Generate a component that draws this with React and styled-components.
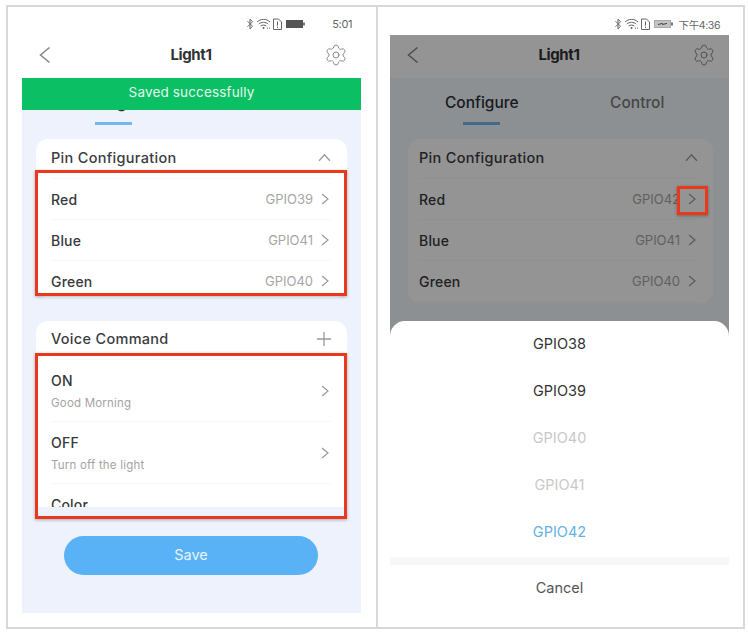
import React from 'react';
import styled, { createGlobalStyle } from 'styled-components';
import { Settings } from 'lucide-react';

const GlobalStyle = createGlobalStyle`
  body {
    margin: 0;
    background: #fff;
    font-family: Inter, "Noto Sans CJK SC", sans-serif;
  }
`;

const Frame = styled.div`
  box-sizing: border-box;
  width: 739px;
  height: 624px;
  margin: 5px 0 0 6px;
  border: 2px solid #d6d8d9;
  display: flex;
`;

const Panel = styled.div`
  box-sizing: border-box;
  width: ${p => p.$width}px;
  padding-left: ${p => p.$pad}px;
  border-left: ${p => (p.$divider ? '2px solid #d6d8d9' : 'none')};
  background: #fff;
`;

const StatusBar = styled.div`
  box-sizing: border-box;
  width: 339px;
  height: 28px;
  padding: 6px 9px 0 0;
  display: flex;
  align-items: center;
  justify-content: flex-end;
`;

const StatusTime = styled.span`
  margin-left: ${p => p.$gap}px;
  font-size: ${p => p.$size}px;
  letter-spacing: -0.4px;
  color: #666;
`;

const Screen = styled.div`
  position: relative;
  width: 339px;
  height: ${p => p.$height}px;
  background: ${p => p.$bg};
  overflow: hidden;
`;

const Header = styled.div`
  box-sizing: border-box;
  height: 43px;
  padding: 0 13px 4px 14px;
  background: #fff;
  display: flex;
  align-items: center;
  justify-content: space-between;
  color: #8a8a8a;
`;

const Title = styled.div`
  margin-left: 4px;
  font-size: 15px;
  font-weight: 700;
  letter-spacing: -0.4px;
  color: #2f3033;
`;

const Toast = styled.div`
  position: absolute;
  top: 43px;
  left: 0;
  right: 0;
  box-sizing: border-box;
  height: 32px;
  padding-bottom: 5px;
  background: #0bbf64;
  color: #e4f8ec;
  font-size: 13.5px;
  letter-spacing: 0.15px;
  display: flex;
  align-items: center;
  justify-content: center;
`;

const Tabs = styled.div`
  height: 47px;
  padding: 0 14px;
  display: flex;
`;

const Tab = styled.div`
  flex: 1;
  position: relative;
  display: flex;
  justify-content: center;
  padding-top: 15px;
  font-size: 15.5px;
  font-weight: 500;
  color: ${p => (p.$active ? '#2c3036' : '#7a7a7a')};
  &::after {
    content: '';
    display: ${p => (p.$active ? 'block' : 'none')};
    position: absolute;
    bottom: 0;
    left: 59px;
    width: 37px;
    height: 3px;
    background: #6fb8f0;
  }
`;

const Card = styled.div`
  box-sizing: border-box;
  width: ${p => p.$width || 311}px;
  height: ${p => p.$height}px;
  margin: ${p => p.$top}px 0 0 ${p => p.$left || 14}px;
  padding: 0 ${p => p.$padRight || 16}px 0 ${p => p.$padLeft || 15}px;
  background: #fff;
  border-radius: ${p => (p.$clip ? '12px 12px 0 0' : '12px')};
  overflow: hidden;
`;

const CardHead = styled.div`
  box-sizing: border-box;
  height: ${p => p.$height}px;
  padding-bottom: 3px;
  display: flex;
  align-items: center;
  justify-content: space-between;
  font-size: 14.5px;
  font-weight: 500;
  letter-spacing: 0.3px;
  color: #3a3c3f;
  border-bottom: 1px solid #f8f8fa;
`;

const Row = styled.div`
  box-sizing: border-box;
  height: ${p => p.$height}px;
  display: flex;
  align-items: center;
  justify-content: space-between;
  border-bottom: 1px solid #f8f8fa;
`;

const RowLabel = styled.div`
  font-size: 14px;
  font-weight: 500;
  letter-spacing: 0.2px;
  color: #37393c;
`;

const RowSub = styled.div`
  margin-top: 7px;
  font-size: 11.5px;
  letter-spacing: 0.2px;
  color: #a3a3a3;
`;

const RowRight = styled.div`
  display: flex;
  align-items: center;
  gap: 6px;
  font-size: 13px;
  color: #a6a6a6;
`;

const SaveButton = styled.div`
  box-sizing: border-box;
  width: 254px;
  height: 39px;
  margin: 29px 0 0 42px;
  padding-bottom: 2px;
  border-radius: 20px;
  background: #5ab2f6;
  color: #e6f4ff;
  font-size: 14.5px;
  display: flex;
  align-items: center;
  justify-content: center;
`;

const Highlight = styled.div`
  position: absolute;
  box-sizing: border-box;
  left: ${p => p.$x}px;
  top: ${p => p.$y}px;
  width: ${p => p.$w}px;
  height: ${p => p.$h}px;
  border: 3px solid #e8391d;
  box-shadow: 0 1px 3px rgba(0, 0, 0, 0.3);
  z-index: 3;
`;

const Dim = styled.div`
  position: absolute;
  inset: 0;
  background: rgba(0, 0, 0, 0.42);
`;

const Sheet = styled.div`
  position: absolute;
  left: 0;
  right: 0;
  top: 286px;
  bottom: 0;
  background: #fff;
  border-radius: 15px 15px 0 0;
  text-align: center;
`;

const SheetItem = styled.div`
  box-sizing: border-box;
  height: 47px;
  padding-bottom: 3px;
  display: flex;
  align-items: center;
  justify-content: center;
  font-size: 14.5px;
  color: ${p => p.$color};
`;

const SheetGap = styled.div`
  height: 8px;
  margin-top: 1px;
  background: #f7f7f7;
`;

const Chevron = ({ dir = 'right', size = 12, color = '#9a9a9a', width = 1.2 }) => {
  const points = {
    right: '3,1 9,6 3,11',
    left: '9,1 3,6 9,11',
    up: '1,9 6,3.5 11,9',
  };
  return (
    <svg width={size} height={size} viewBox="0 0 12 12" fill="none" stroke={color} strokeWidth={width}>
      <polyline points={points[dir]} />
    </svg>
  );
};

const Plus = () => (
  <svg width="14" height="14" viewBox="0 0 14 14" stroke="#9a9a9a" strokeWidth="1.3">
    <path d="M7 0V14M0 7H14" />
  </svg>
);

const StatusIcons = ({ charging }) => (
  <svg width="58" height="14" viewBox="0 0 58 14" fill="none" stroke="#666" strokeWidth="1">
    {/* bluetooth */}
    <path d="M0.5 4.2L5.5 9.2L3 12V2L5.5 4.8L0.5 9.8" />
    {/* wifi */}
    <path d="M10 5C13.5 1.5 19.5 1.5 23 5M11.8 7C14.2 4.8 18.8 4.8 21.2 7M13.6 9C15.2 7.8 17.8 7.8 19.4 9" />
    <circle cx="16.5" cy="11" r="1" fill="#666" stroke="none" />
    <path d="M20 11.2H23" strokeDasharray="1 1" />
    {/* sim */}
    <path d="M26.5 2H31.5L34.5 5V12.5H26.5Z" />
    <path d="M30.5 4.5V8.6M30.5 9.6V11" />
    {/* battery */}
    <rect x="39.5" y="3.5" width="16" height="7" fill={charging ? '#c2c2c2' : '#555'} stroke={charging ? '#aaa' : '#555'} />
    {charging && <path d="M43 7.5L47.5 6.4V7.5L52 6.4" stroke="#444" />}
    <rect x="56" y="5.5" width="2" height="3" fill="#777" stroke="none" />
  </svg>
);

const PinRows = ({ red }) => (
  <>
    <Row $height={41}>
      <RowLabel>Red</RowLabel>
      <RowRight>{red}<Chevron /></RowRight>
    </Row>
    <Row $height={41}>
      <RowLabel>Blue</RowLabel>
      <RowRight>GPIO41<Chevron /></RowRight>
    </Row>
    <Row $height={41}>
      <RowLabel>Green</RowLabel>
      <RowRight>GPIO40<Chevron /></RowRight>
    </Row>
  </>
);

const TopBar = () => (
  <Header>
    <Chevron dir="left" size={18} color="#858585" width={1} />
    <Title>Light1</Title>
    <Settings size={24} strokeWidth={1} />
  </Header>
);

const TabRow = () => (
  <Tabs>
    <Tab $active>Configure</Tab>
    <Tab>Control</Tab>
  </Tabs>
);

export default function App() {
  return (
    <>
      <GlobalStyle />
      <Frame>
        <Panel $width={368} $pad={14}>
          <StatusBar>
            <StatusIcons />
            <StatusTime $gap={27} $size={11}>5:01</StatusTime>
          </StatusBar>
          <Screen $height={578} $bg="#eef2fd">
            <TopBar />
            <TabRow />
            <Toast>Saved successfully</Toast>
            <Card $top={14} $height={159}>
              <CardHead $height={40}>
                Pin Configuration
                <Chevron dir="up" size={13} />
              </CardHead>
              <PinRows red="GPIO39" />
            </Card>
            <Highlight $x={13} $y={135} $w={312} $h={126} />
            <Card $top={23} $height={186} $clip>
              <CardHead $height={39}>
                Voice Command
                <Plus />
              </CardHead>
              <Row $height={62}>
                <div>
                  <RowLabel>ON</RowLabel>
                  <RowSub>Good Morning</RowSub>
                </div>
                <Chevron />
              </Row>
              <Row $height={62}>
                <div>
                  <RowLabel>OFF</RowLabel>
                  <RowSub>Turn off the light</RowSub>
                </div>
                <Chevron />
              </Row>
              <Row $height={41}>
                <RowLabel>Color</RowLabel>
              </Row>
            </Card>
            <Highlight $x={13} $y={318} $w={312} $h={166} />
            <SaveButton>Save</SaveButton>
          </Screen>
        </Panel>
        <Panel $width={367} $pad={12} $divider>
          <StatusBar>
            <StatusIcons charging />
            <StatusTime $gap={6} $size={10.5}>下午4:36</StatusTime>
          </StatusBar>
          <Screen $height={585} $bg="#f2f8fd">
            <TopBar />
            <TabRow />
            <Card $top={14} $height={164} $left={18} $width={305} $padLeft={11} $padRight={15}>
              <CardHead $height={40}>
                Pin Configuration
                <Chevron dir="up" size={13} />
              </CardHead>
              <PinRows red="GPIO42" />
            </Card>
            <Dim />
            <Highlight $x={287} $y={151} $w={31} $h={29} />
            <Sheet>
              <SheetItem $color="#333">GPIO38</SheetItem>
              <SheetItem $color="#333">GPIO39</SheetItem>
              <SheetItem $color="#c9c9c9">GPIO40</SheetItem>
              <SheetItem $color="#c9c9c9">GPIO41</SheetItem>
              <SheetItem $color="#62b2e4">GPIO42</SheetItem>
              <SheetGap />
              <SheetItem $color="#555">Cancel</SheetItem>
            </Sheet>
          </Screen>
        </Panel>
      </Frame>
    </>
  );
}
